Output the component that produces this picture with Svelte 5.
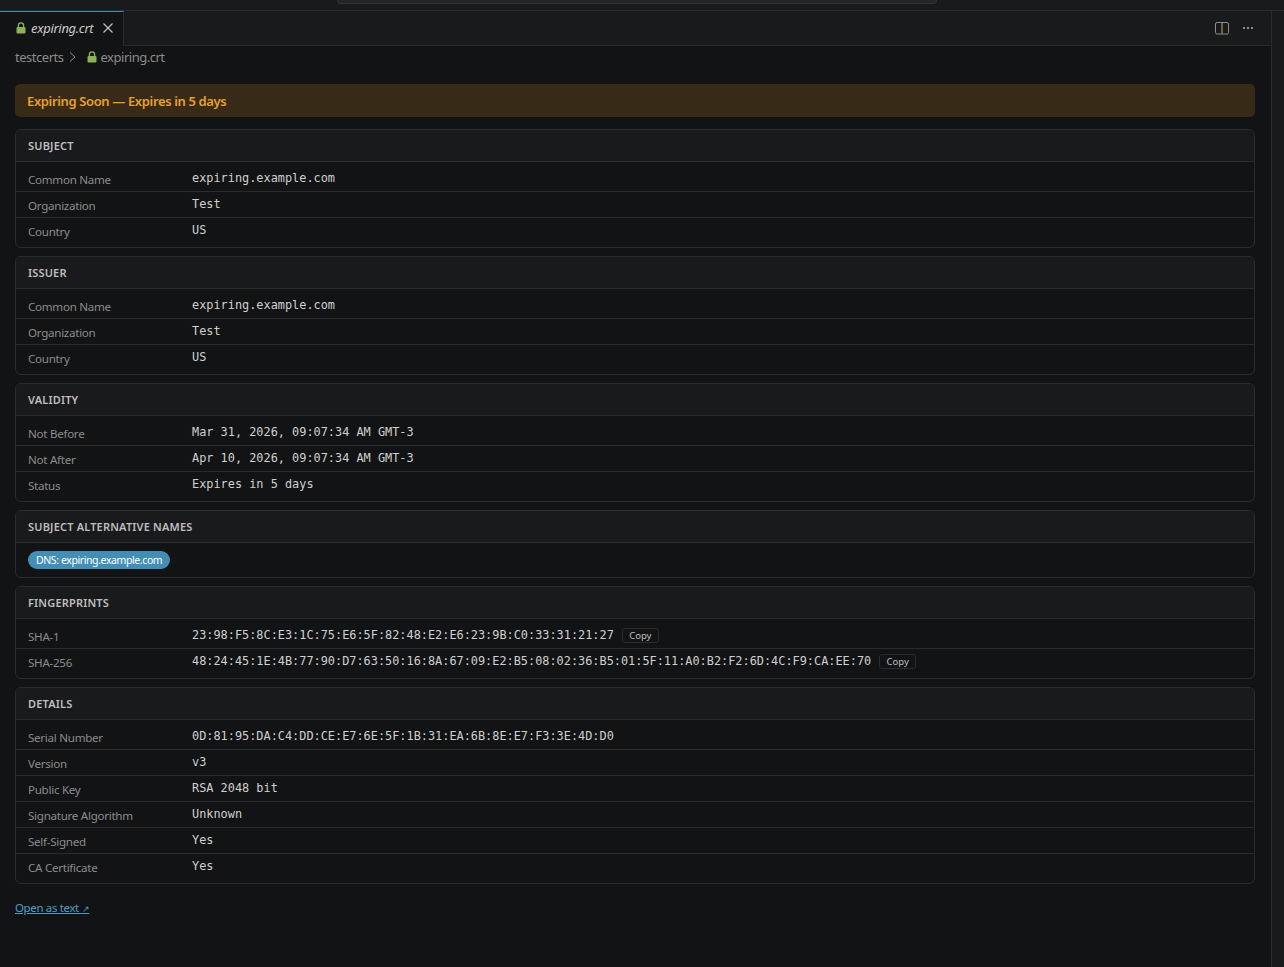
<script>
    const sections = [
        { title: 'Subject', rows: [
            ['Common Name', 'expiring.example.com'],
            ['Organization', 'Test'],
            ['Country', 'US']
        ] },
        { title: 'Issuer', rows: [
            ['Common Name', 'expiring.example.com'],
            ['Organization', 'Test'],
            ['Country', 'US']
        ] },
        { title: 'Validity', rows: [
            ['Not Before', 'Mar 31, 2026, 09:07:34 AM GMT-3'],
            ['Not After', 'Apr 10, 2026, 09:07:34 AM GMT-3'],
            ['Status', 'Expires in 5 days']
        ] },
        { title: 'Subject Alternative Names', sans: ['DNS: expiring.example.com'] },
        { title: 'Fingerprints', copy: true, rows: [
            ['SHA-1', '23:98:F5:8C:E3:1C:75:E6:5F:82:48:E2:E6:23:9B:C0:33:31:21:27'],
            ['SHA-256', '48:24:45:1E:4B:77:90:D7:63:50:16:8A:67:09:E2:B5:08:02:36:B5:01:5F:11:A0:B2:F2:6D:4C:F9:CA:EE:70']
        ] },
        { title: 'Details', rows: [
            ['Serial Number', '0D:81:95:DA:C4:DD:CE:E7:6E:5F:1B:31:EA:6B:8E:E7:F3:3E:4D:D0'],
            ['Version', 'v3'],
            ['Public Key', 'RSA 2048 bit'],
            ['Signature Algorithm', 'Unknown'],
            ['Self-Signed', 'Yes'],
            ['CA Certificate', 'Yes']
        ] }
    ];
</script>

{#snippet lock()}
    <svg class="lock" width="10" height="12" viewBox="0 0 10 12">
        <path d="M2.4 5V3.4a2.6 2.6 0 0 1 5.2 0V5" fill="none" stroke="#8db255" stroke-width="1.3" />
        <rect x="0.5" y="5" width="9" height="6.5" rx="1" fill="#8db255" />
    </svg>
{/snippet}

<div class="window">
    <div class="titlebar">
        <div class="command-center"></div>
    </div>
    <div class="workbench">
        <div class="editor">
            <div class="tabs">
                <div class="tab">
                    {@render lock()}
                    <span class="tab-name">expiring.crt</span>
                    <svg class="close" width="12" height="12" viewBox="0 0 12 12">
                        <path d="M1.5 1.5l9 9M10.5 1.5l-9 9" stroke="#c8c8c8" stroke-width="1.1" fill="none" />
                    </svg>
                </div>
                <div class="tab-actions">
                    <svg width="16" height="16" viewBox="0 0 16 16" fill="none">
                        <rect x="1.5" y="2.5" width="13" height="11.5" rx="1.5" stroke="#8c8c8c" />
                        <path d="M8 3v11" stroke="#a07a4c" stroke-width="1.4" />
                    </svg>
                    <svg width="16" height="16" viewBox="0 0 16 16" fill="#8c8c8c">
                        <rect x="3" y="7" width="2" height="2" />
                        <rect x="7" y="7" width="2" height="2" />
                        <rect x="11" y="7" width="2" height="2" />
                    </svg>
                </div>
            </div>
            <div class="breadcrumbs">
                <span>testcerts</span>
                <svg class="chevron" width="10" height="12" viewBox="0 0 10 12" fill="none">
                    <path d="M2 1.5L7 6l-5 4.5" stroke="#8c8c8c" />
                </svg>
                {@render lock()}
                <span>expiring.crt</span>
            </div>
            <div class="content">
                <div class="banner">Expiring Soon — Expires in 5 days</div>
                {#each sections as section}
                    <section class="card">
                        <h2>{section.title}</h2>
                        {#if section.rows}
                            <div class="rows">
                                {#each section.rows as [label, value]}
                                    <div class="row">
                                        <span class="label">{label}</span>
                                        <span class="value">{value}</span>
                                        {#if section.copy}
                                            <button>Copy</button>
                                        {/if}
                                    </div>
                                {/each}
                            </div>
                        {/if}
                        {#if section.sans}
                            <div class="pills">
                                {#each section.sans as name}
                                    <span class="pill">{name}</span>
                                {/each}
                            </div>
                        {/if}
                    </section>
                {/each}
                <a class="open-link" href="#top">Open as text <span class="arrow">↗</span></a>
            </div>
        </div>
        <div class="side"></div>
    </div>
</div>

<style>
    :global(body) {
        background: #121314;
    }

    .window {
        height: 967px;
        display: flex;
        flex-direction: column;
        overflow: hidden;
        font-family: "Noto Sans", "Open Sans", sans-serif;
        color: #bfbfbf;
    }

    .titlebar {
        height: 10px;
        flex: none;
        background: #191a1b;
        border-bottom: 1px solid #2a2b2c;
        display: flex;
        justify-content: center;
        padding-right: 10px;
    }

    .command-center {
        width: 600px;
        height: 4px;
        box-sizing: border-box;
        background: #252627;
        border: 1px solid #333435;
        border-top: none;
        border-radius: 0 0 6px 6px;
    }

    .workbench {
        flex: 1;
        display: flex;
        min-height: 0;
    }

    .editor {
        flex: 1;
        min-width: 0;
    }

    .side {
        width: 12px;
        background: #191a1b;
        border-left: 1px solid #2a2b2c;
    }

    .tabs {
        height: 35px;
        box-sizing: border-box;
        display: flex;
        justify-content: space-between;
        background: #191a1b;
        border-bottom: 1px solid #2a2b2c;
    }

    .tab {
        width: 124px;
        height: 35px;
        box-sizing: border-box;
        display: flex;
        align-items: center;
        padding: 0 9px 2px 16px;
        background: #121314;
        border-top: 1px solid #3994bc;
        border-right: 1px solid #2a2b2c;
    }

    .tab-name {
        margin-left: 5px;
        font-size: 13px;
        font-style: italic;
        color: #cccccc;
        letter-spacing: -0.3px;
    }

    .close {
        margin-left: auto;
    }

    .lock {
        flex: none;
    }

    .tab-actions {
        display: flex;
        align-items: center;
        gap: 10px;
        padding-right: 15px;
    }

    .breadcrumbs {
        height: 22px;
        display: flex;
        align-items: center;
        padding-left: 15px;
        font-size: 13px;
        color: #8c8c8c;
        letter-spacing: -0.48px;
    }

    .chevron {
        margin: 0 5px 0 4px;
    }

    .breadcrumbs .lock {
        margin: 0 4px 0 4px;
    }

    .content {
        display: flex;
        flex-direction: column;
        gap: 8px;
        padding: 16px 16px 0 15px;
    }

    .banner {
        height: 33px;
        box-sizing: border-box;
        display: flex;
        align-items: center;
        padding: 0 12px;
        margin-bottom: 4px;
        border-radius: 5px;
        background: #372b18;
        color: #e8a02c;
        font-size: 13px;
        font-weight: 600;
        letter-spacing: -0.36px;
    }

    .card {
        border: 1px solid #2a2b2c;
        border-radius: 6px;
        overflow: hidden;
    }

    h2 {
        margin: 0;
        height: 32px;
        box-sizing: border-box;
        display: flex;
        align-items: center;
        padding: 0 12px;
        background: #191a1b;
        border-bottom: 1px solid #2a2b2c;
        font-size: 11px;
        font-weight: 600;
        text-transform: uppercase;
        letter-spacing: 0.18px;
        color: #bfbfbf;
    }

    .rows {
        padding: 4px 0;
    }

    .row {
        display: flex;
        align-items: flex-start;
        height: 26px;
        box-sizing: border-box;
        padding: 0 12px;
        border-bottom: 1px solid #2a2b2c;
    }

    .row:last-child {
        border-bottom: none;
        height: 25px;
    }

    .label {
        width: 164px;
        flex: none;
        margin-top: 6px;
        font-size: 11.6px;
        letter-spacing: -0.28px;
        color: #8c8c8c;
    }

    .value {
        margin-top: 5px;
        font-family: "DejaVu Sans Mono", monospace;
        font-size: 11.88px;
        color: #d0d0d0;
    }

    button {
        margin: 5px 0 0 8px;
        width: 37px;
        height: 15px;
        padding: 0;
        background: transparent;
        border: 1px solid #2a2b2c;
        border-radius: 3px;
        font-family: "Noto Sans", sans-serif;
        font-size: 9.5px;
        line-height: 1;
        color: #bfbfbf;
    }

    .pills {
        padding: 8px 12px;
        display: flex;
    }

    .pill {
        height: 18px;
        display: flex;
        align-items: center;
        padding: 0 8px;
        border-radius: 9px;
        background: #428eb5;
        color: #ffffff;
        font-size: 10.5px;
        letter-spacing: -0.4px;
    }

    .open-link {
        align-self: flex-start;
        margin-top: 8px;
        font-size: 11.5px;
        letter-spacing: -0.36px;
        color: #48a0c7;
    }

    .arrow {
        font-size: 9px;
    }
</style>
